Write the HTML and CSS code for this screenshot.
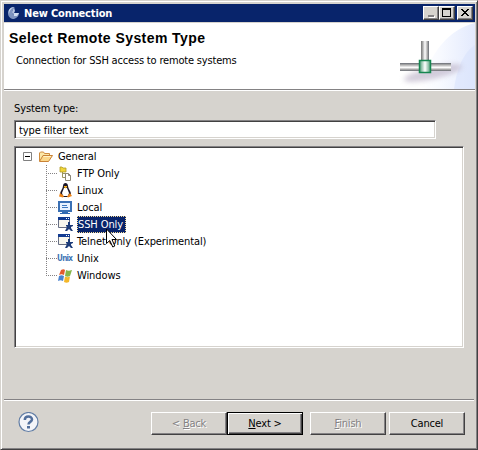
FILE: index.html
```html
<!DOCTYPE html>
<html lang="en">
<head>
<meta charset="utf-8">
<title>New Connection</title>
<link rel="stylesheet" href="styles.css">
</head>
<body>
<div class="window">
  <div class="titlebar">
    <svg class="app-icon" width="12" height="14" viewBox="0 0 12 14"><path d="M6 1C2 1 0 4 0 7c0 4 3 6 6 6 3-1 5-3 5-6H6l-1 2-1-3z" fill="#7f94c0"/><path d="M7 1C3 2 1 5 1 8c-1-4 1-7 6-7zM6 7h5l-2 3H6z" fill="#d0dcf0"/><path d="M6 1L4 6l1 3 1-2 1-2z" fill="#b4c2df"/></svg>
    <span class="caption">New Connection</span>
    <div class="controls">
      <span class="ctl"><svg width="13" height="12"><path d="M4 9h6v2H4z" fill="#fff"/><path d="M3 8h6v2H3z" fill="#848284"/></svg></span>
      <span class="ctl"><svg width="13" height="12"><path d="M1 1h9v9H1zM2 3v6h7V3z" fill="#000" fill-rule="evenodd"/></svg></span>
      <span class="ctl close"><svg width="13" height="12" shape-rendering="crispEdges"><path d="M2 2h2v1h1v1h2V3h1V2h2v1H9v1H8v1H7v1h1v1h1v1h1v1H8V8H7V7H5v1H4v1H2V8h1V7h1V6h1V5H4V4H3V3H2z" fill="#000"/></svg></span>
    </div>
  </div>
  <header class="banner">
    <div class="banner-text">
      <h1>Select Remote System Type</h1>
      <p>Connection for SSH access to remote systems</p>
    </div>
    <svg class="banner-art" width="91" height="66" viewBox="0 0 91 66">
      <defs>
        <linearGradient id="h" x2="0" y2="1"><stop stop-color="#666a72"/><stop offset=".22" stop-color="#aaa"/><stop offset=".55" stop-color="#fff"/><stop offset=".8" stop-color="#aaa"/><stop offset="1" stop-color="#666a72"/></linearGradient>
        <linearGradient id="v"><stop stop-color="#777"/><stop offset=".22" stop-color="#aaa"/><stop offset=".5" stop-color="#fff"/><stop offset=".8" stop-color="#aaa"/><stop offset="1" stop-color="#666a72"/></linearGradient>
        <linearGradient id="g"><stop stop-color="#4f9c76"/><stop offset=".5" stop-color="#fff"/><stop offset="1" stop-color="#4f9c76"/></linearGradient>
        <linearGradient id="sky"><stop stop-color="#fff"/><stop offset=".35" stop-color="#f8faff"/><stop offset="1" stop-color="#e3eafd"/></linearGradient>
        <filter id="b" x="-30%" y="-80%" width="160%" height="260%"><feGaussianBlur stdDeviation="2.5"/></filter>
      </defs>
      <path d="M91 0C66 6 46 28 36 66h55z" fill="url(#sky)"/>
      <path d="M91 22C79 30 73 45 70 66h21z" fill="#d8e2fc" opacity=".6"/>
      <ellipse cx="49" cy="50" rx="30" ry="6" transform="rotate(-13 49 50)" fill="#c4bccf" opacity=".75" filter="url(#b)"/>
      <path d="M37 18h8v22h-8z" fill="url(#v)"/>
      <path d="M16 40h51v8H16z" fill="url(#h)"/>
      <path d="M35.500 37.500h11v12h-11z" fill="url(#g)" stroke="#168650" stroke-width="1.500"/>
    </svg>
  </header>
  <main class="page">
    <label class="label" for="filter">System type:</label>
    <input class="filter" id="filter" value="type filter text">
    <div class="tree">
      <div class="row root">
        <svg class="expander" width="9" height="9"><path d="M.5.5h8v8h-8z" fill="#fff" stroke="#808080"/><path d="M2 4h5v1H2z"/></svg>
        <svg class="icon" width="16" height="16"><path d="M1.500 12V4l1-1h3l1 1.500h5v3" fill="#fce8a8" stroke="#cf8c40"/><path d="M1.500 12.500L5 6.500h9.500l-4 6z" fill="#fbd78a" stroke="#c98236"/><path d="M5.500 7.500h7.500" stroke="#fff2c8"/></svg>
        <span class="name general">General</span>
      </div>
      <div class="children">
        <div class="row">
          <svg class="icon" width="16" height="16"><path d="M5.500 6v5.500H9M5.500 7.500H9" fill="none" stroke="#9a9660"/><path d="M3 1h2l1 1h3v4H3z" fill="#f0d63a" stroke="#b09a28" stroke-width=".8"/><path d="M8.500 7.500h3l2 2v5h-5z" fill="#fff" stroke="#8c8878"/><path d="M11.500 7.500v2h2" fill="none" stroke="#8c8878"/></svg>
          <span class="name">FTP Only</span>
        </div>
        <div class="row">
          <svg class="icon" width="16" height="16"><path d="M6 3c0-4 5-4 5 0 0 3 3 5 3 8l-2 3H5l-2-3c0-3 3-5 3-8z" fill="#1a1526"/><path d="M7 5h3l2 5-1 3H6l-1-3z" fill="#fff"/><path d="M7 3h3v1L8.500 5.500 7 4z" fill="#f3ae20"/><path d="M3 10l4 3-1 1.500-4-1zM13 10l2 3-4 1.500-1-1z" fill="#ef8518"/></svg>
          <span class="name">Linux</span>
        </div>
        <div class="row">
          <svg class="icon" width="16" height="16"><path d="M1 1h14v11H1z" fill="#3a70b4"/><path d="M3 3h10v7H3z" fill="#e9f3ff"/><path d="M5 5h5v1H5zM5 7h6v1H5z" fill="#3f79bf"/><path d="M5 12h6v1h2v1H3v-1h2z" fill="#316ab2"/></svg>
          <span class="name">Local</span>
        </div>
        <div class="row">
          <svg class="icon" width="16" height="16"><path d="M1.500 1.500h11v9h-11z" fill="#f7f6ee" stroke="#676e84"/><path d="M1 0h12v3H1z" fill="#123b91"/><path d="M9 1h1v1H9zM11 1h1v1h-1z" fill="#fff"/><path d="M11 5h2v3h3v1l-2 1v1l2 3h-2l-2-2-2 2H8l2-4-1-1V8h2z" fill="#1c3b78"/></svg>
          <span class="name selected">SSH Only</span>
        </div>
        <div class="row">
          <svg class="icon" width="16" height="16"><path d="M1.500 1.500h11v9h-11z" fill="#f7f6ee" stroke="#676e84"/><path d="M1 0h12v3H1z" fill="#123b91"/><path d="M9 1h1v1H9zM11 1h1v1h-1z" fill="#fff"/><path d="M11 5h2v3h3v1l-2 1v1l2 3h-2l-2-2-2 2H8l2-4-1-1V8h2z" fill="#1c3b78"/></svg>
          <span class="name">Telnet Only (Experimental)</span>
        </div>
        <div class="row">
          <span class="icon unix-logo">Unix</span>
          <span class="name">Unix</span>
        </div>
        <div class="row">
          <svg class="icon" width="16" height="16"><path d="M4 2c2-1 3-1 4 0L7 7C5 6 4 6 2 7z" fill="#e35b2d"/><path d="M9 2c2 1 3 1 6 0l-2 6c-2 1-3 1-5 0z" fill="#86b64a"/><path d="M2 8c2-1 3-1 5 0l-1 5c-2-1-3-1-5 0z" fill="#4b83cf"/><path d="M8 8.500c2 1 3 1 5 0l-1 5.500c-2 1-3 1-5 0z" fill="#f3b72a"/></svg>
          <span class="name">Windows</span>
        </div>
      </div>
    </div>
  </main>
  <footer class="footer">
    <svg class="help" width="21" height="21"><circle cx="10.500" cy="10" r="9.500" fill="#f3f4f8" stroke="#617da5" stroke-width="1.200"/><path d="M6.800 8C6.800 3.500 14 3.500 14 7.500c0 2.500-3.500 2.300-3.500 5" fill="none" stroke="#526f9c" stroke-width="2.500"/><path d="M9 14h3v2.500H9z" fill="#526f9c"/></svg>
    <button class="btn back" disabled><span>&lt; <u>B</u>ack</span></button>
    <button class="btn next"><span><u>N</u>ext &gt;</span></button>
    <button class="btn finish" disabled><span><u>F</u>inish</span></button>
    <button class="btn cancel"><span>Cancel</span></button>
  </footer>
</div>
<svg class="pointer" width="13" height="21" viewBox="0 0 13 21"><path d="M.5 1v14.500l3.300-3 3 6.500 2-1-2.800-6.500h4.500z" fill="#fff" stroke="#000"/></svg>
</body>
</html>
```
FILE: styles.css
```css
* { box-sizing: border-box; }
body { margin: 0; font: 11px/17px "DejaVu Sans Condensed", "DejaVu Sans", sans-serif; font-stretch: condensed; letter-spacing: -.1px; color: #000; }
.window { width: 478px; height: 450px; background: #d6d3ce; border: 1px solid; border-color: #d6d3ce #424142 #424142 #d6d3ce; box-shadow: inset 1px 1px #fff, inset -1px -1px #848284; padding: 3px; display: flex; flex-direction: column; }
.titlebar { height: 18px; margin-right: -1px; background: #08246b; display: flex; align-items: center; flex: none; padding: 0 2px 0 4px; }
.app-icon { margin-right: 4px; }
.caption { color: #fff; font-weight: bold; letter-spacing: -.15px; white-space: nowrap; }
.controls { margin-left: auto; display: flex; }
.ctl { width: 16px; height: 14px; background: #d6d3ce; border: 1px solid; border-color: #fff #424142 #424142 #fff; box-shadow: inset -1px -1px #848284; display: flex; }
.ctl svg { margin-left: 1px; }
.close { margin-left: 2px; }
.banner { height: 68px; margin: 0 -1px 0 0; flex: none; border-top: 1px solid #d6d3ce; border-bottom: 1px solid #848284; box-shadow: 0 1px #fff; background: #fff; display: flex; justify-content: space-between; }
.banner-text { padding: 6px 0 0 5px; white-space: nowrap; }
h1 { margin: 0; font: bold 14px/18px "Liberation Sans", sans-serif; letter-spacing: .43px; }
p { margin: 6px 0 0 7px; letter-spacing: -.18px; line-height: 16px; }
.page { padding: 10px 0 0 10px; flex: 1; display: flex; flex-direction: column; align-items: flex-start; }
.label { height: 20px; line-height: 17px; }
.filter, .tree { border: 1px solid; border-color: #848284 #fff #fff #848284; box-shadow: inset 1px 1px #424142, inset -1px -1px #d6d3ce; background: #fff; }
.filter { width: 422px; height: 19px; padding: 2px 4px 0; font: inherit; letter-spacing: inherit; outline: none; margin: 0 0 7px; }
.tree { width: 450px; height: 202px; padding: 1px 1px 1px 8px; }
.row { height: 17px; display: flex; align-items: center; white-space: nowrap; }
.icon { flex: none; width: 16px; margin-right: 4px; }
.name { height: 17px; padding-top: 1px; line-height: 16px; }
.name:not(.selected) { padding-top: 1px; }
.expander { margin-right: 6px; }
.children { margin-left: 23px; background: repeating-linear-gradient(#848284 0 1px, transparent 1px 2px) 0 0 / 1px 112px no-repeat; }
.children .row::before { content: ""; width: 11px; height: 1px; flex: none; background: repeating-linear-gradient(90deg, #848284 0 1px, transparent 1px 2px); }
.selected { background: #08246b; color: #fff; outline: 1px dotted #f7db94; outline-offset: -1px; width: 49px; padding-left: 1px; }
.unix-logo { color: #3f75b5; font: bold 8px/18px "DejaVu Sans Condensed", "DejaVu Sans", sans-serif; letter-spacing: -.7px; }
.footer { height: 47px; flex: none; border-top: 1px solid #848284; box-shadow: inset 0 1px #fff; display: flex; align-items: flex-start; padding: 12px 0 0; }
.help { margin: 0 112px 0 14px; }
.btn { width: 76px; height: 23px; padding: 0; font: inherit; letter-spacing: -.2px; color: #000; background: #d6d3ce; border: 1px solid; border-color: #fff #424142 #424142 #fff; box-shadow: inset -1px -1px #848284; flex: none; }
.btn:disabled { color: #848284; text-shadow: 1px 1px #fff; }
.next { border-color: #000; box-shadow: inset 1px 1px #fff, inset -1px -1px #424142, inset -2px -2px #848284; }
.finish { margin: 0 3px 0 7px; }
u { text-underline-offset: 1px; }
.pointer { position: absolute; left: 106px; top: 228px; }
```
